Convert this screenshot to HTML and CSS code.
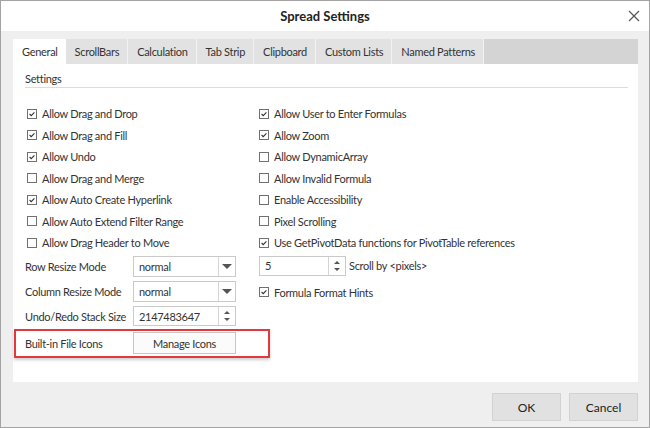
FILE: index.html
```html
<!DOCTYPE html>
<html lang="en">
<head>
    <meta charset="UTF-8">
    <title>Spread Settings</title>
    <link rel="stylesheet" href="styles.css">
</head>
<body>

    <div class="dialog">
        <div class="titlebar">
            <span class="title">Spread Settings</span>
            <button class="close-btn">
                <svg width="12" height="12" viewBox="0 0 12 12">
                    <path d="M1 1L11 11M11 1L1 11" stroke="#555" stroke-width="1.2" fill="none"/>
                </svg>
            </button>
        </div>

        <div class="content">
            <div class="tabs">
                <div class="tab active">General</div>
                <div class="tab">ScrollBars</div>
                <div class="tab">Calculation</div>
                <div class="tab">Tab Strip</div>
                <div class="tab">Clipboard</div>
                <div class="tab">Custom Lists</div>
                <div class="tab">Named Patterns</div>
                <div class="tab-fill"></div>
            </div>

            <div class="panel">
                <div class="section-title">Settings</div>

                <div class="columns">
                    <div class="col col-left">
                        <div class="check"><span class="box on"><svg viewBox="0 0 10 10"><path d="M2 5L4 7L8 3"/></svg></span>Allow Drag and Drop</div>
                        <div class="check"><span class="box on"><svg viewBox="0 0 10 10"><path d="M2 5L4 7L8 3"/></svg></span>Allow Drag and Fill</div>
                        <div class="check"><span class="box on"><svg viewBox="0 0 10 10"><path d="M2 5L4 7L8 3"/></svg></span>Allow Undo</div>
                        <div class="check"><span class="box"></span>Allow Drag and Merge</div>
                        <div class="check"><span class="box on"><svg viewBox="0 0 10 10"><path d="M2 5L4 7L8 3"/></svg></span>Allow Auto Create Hyperlink</div>
                        <div class="check"><span class="box"></span>Allow Auto Extend Filter Range</div>
                        <div class="check"><span class="box"></span>Allow Drag Header to Move</div>

                        <div class="field-row first">
                            <span class="field-label">Row Resize Mode</span>
                            <div class="select"><span class="value">normal</span><span class="drop"><span class="tri-down"></span></span></div>
                        </div>
                        <div class="field-row">
                            <span class="field-label">Column Resize Mode</span>
                            <div class="select"><span class="value">normal</span><span class="drop"><span class="tri-down"></span></span></div>
                        </div>
                        <div class="field-row">
                            <span class="field-label">Undo/Redo Stack Size</span>
                            <div class="select spin"><span class="value">2147483647</span><span class="spin-btns"><span class="up"></span><span class="down"></span></span></div>
                        </div>
                        <div class="field-row highlight">
                            <span class="field-label">Built-in File Icons</span>
                            <button class="manage-btn">Manage Icons</button>
                        </div>
                    </div>

                    <div class="col col-right">
                        <div class="check"><span class="box on"><svg viewBox="0 0 10 10"><path d="M2 5L4 7L8 3"/></svg></span>Allow User to Enter Formulas</div>
                        <div class="check"><span class="box on"><svg viewBox="0 0 10 10"><path d="M2 5L4 7L8 3"/></svg></span>Allow Zoom</div>
                        <div class="check"><span class="box"></span>Allow DynamicArray</div>
                        <div class="check"><span class="box"></span>Allow Invalid Formula</div>
                        <div class="check"><span class="box"></span>Enable Accessibility</div>
                        <div class="check"><span class="box"></span>Pixel Scrolling</div>
                        <div class="check"><span class="box on"><svg viewBox="0 0 10 10"><path d="M2 5L4 7L8 3"/></svg></span>Use GetPivotData functions for PivotTable references</div>

                        <div class="scroll-row">
                            <div class="select spin small"><span class="value">5</span><span class="spin-btns"><span class="up"></span><span class="down"></span></span></div>
                            <span>Scroll by &lt;pixels&gt;</span>
                        </div>
                        <div class="check hints"><span class="box on"><svg viewBox="0 0 10 10"><path d="M2 5L4 7L8 3"/></svg></span>Formula Format Hints</div>
                    </div>
                </div>
            </div>

            <div class="footer">
                <button class="btn">OK</button>
                <button class="btn">Cancel</button>
            </div>
        </div>
    </div>

</body>
</html>
```

FILE: styles.css
```css
body {
    margin: 0;
    font-family: "Lato", "Noto Sans", sans-serif;
    font-size: 11px;
    letter-spacing: -0.3px;
    color: #333;
}

* { box-sizing: border-box; }

.dialog {
    width: 650px;
    height: 428px;
    border: 1px solid #a3a3a3;
    background-color: #efefef;
    display: flex;
    flex-direction: column;
}

.titlebar {
    height: 30px;
    background-color: #fff;
    display: flex;
    align-items: center;
    justify-content: center;
    position: relative;
}

.title {
    font-size: 13px;
    font-weight: bold;
    letter-spacing: 0;
    color: #222;
}

.close-btn {
    position: absolute;
    right: 9px;
    top: 9px;
    border: none;
    background: none;
    padding: 0;
    width: 12px;
    height: 12px;
}

.close-btn svg { display: block; }

.content {
    flex: 1;
    display: flex;
    flex-direction: column;
    padding: 8px 11px 0 12px;
}

/* tab strip */
.tabs {
    display: flex;
    height: 25px;
}

.tab {
    background-color: #e2e2e2;
    border-right: 1px solid #f2f2f2;
    padding: 0 8px 0 9px;
    display: flex;
    align-items: center;
    white-space: nowrap;
}

.tab.active {
    background-color: #fff;
    border-right: none;
}

.tab-fill {
    flex: 1;
    background-color: #d4d4d4;
}

.panel {
    background-color: #fff;
    height: 318px;
    padding: 0 10px 0 12px;
}

.section-title {
    height: 24px;
    padding-top: 7px;
    line-height: 16px;
    border-bottom: 1px solid #dcdcdc;
}

.columns {
    display: grid;
    grid-template-columns: 233px 1fr;
    margin-top: 15px;
}

.col {
    display: flex;
    flex-direction: column;
}

.check {
    height: 21.5px;
    display: flex;
    align-items: center;
    gap: 5px;
    padding-left: 2px;
    white-space: nowrap;
}

.col-right .check { padding-left: 1px; }

.box {
    width: 10px;
    height: 10px;
    border: 1px solid #707070;
    background: #fff;
    flex: none;
}

.box svg {
    display: block;
    width: 8px;
    height: 8px;
    fill: none;
    stroke: #333;
    stroke-width: 1.4;
}

.field-row {
    display: flex;
    align-items: center;
    height: 21px;
    margin-top: 4px;
}

.field-row.first { margin-top: 2px; }

.field-label {
    width: 108px;
    flex: none;
    white-space: nowrap;
}

.select {
    width: 103px;
    height: 21px;
    border: 1px solid #cacaca;
    display: flex;
    align-items: center;
}

.select .value {
    flex: 1;
    padding-left: 5px;
}

.drop {
    width: 17px;
    height: 100%;
    border-left: 1px solid #d6d6d6;
    display: flex;
    align-items: center;
    justify-content: center;
}

.tri-down {
    width: 0;
    height: 0;
    border-left: 5px solid transparent;
    border-right: 5px solid transparent;
    border-top: 5px solid #555;
}

.spin { height: 20px; }

.spin-btns {
    width: 17px;
    height: 100%;
    border-left: 1px solid #d6d6d6;
    display: flex;
    flex-direction: column;
    align-items: center;
    justify-content: center;
    gap: 4px;
}

.spin-btns .up,
.spin-btns .down {
    width: 0;
    height: 0;
    border-left: 3px solid transparent;
    border-right: 3px solid transparent;
}

.spin-btns .up { border-bottom: 3px solid #555; }
.spin-btns .down { border-top: 3px solid #555; }

.highlight {
    width: 256px;
    height: 29px;
    margin-left: -11px;
    margin-top: 2px;
    padding: 0 0 0 9px;
    border: 2px solid #e0393e;
    box-shadow: 0 2px 3px rgba(0, 0, 0, 0.2);
}

.manage-btn {
    width: 103px;
    height: 22px;
    border: 1px solid #c6c6c6;
    background-color: #fbfbfb;
    font-family: inherit;
    font-size: 11px;
    letter-spacing: -0.3px;
    color: #333;
    padding: 0;
}

.scroll-row {
    display: flex;
    align-items: center;
    gap: 3px;
    margin-top: 2px;
    padding-left: 1px;
}

.select.small { width: 87px; }

.hints { margin-top: 6px; }

.footer {
    display: flex;
    justify-content: flex-end;
    gap: 8px;
    padding-top: 11px;
}

.btn {
    width: 69px;
    height: 28px;
    background-color: #e1e1e1;
    border: 1px solid #d2d2d2;
    font-family: inherit;
    font-size: 12px;
    color: #222;
}
```
